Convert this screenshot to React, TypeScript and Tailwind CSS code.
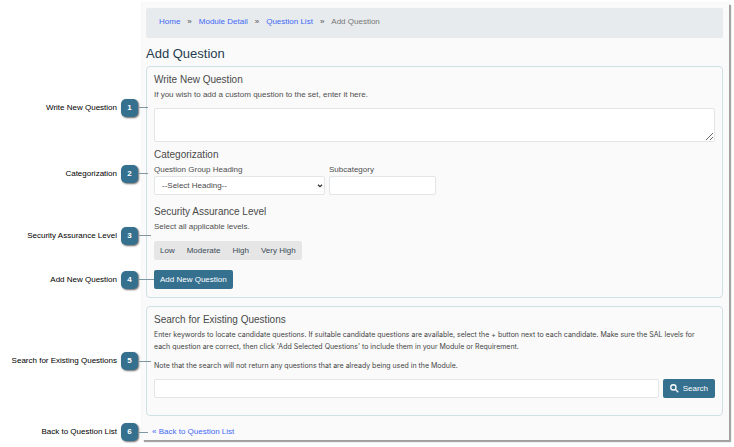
import React from "react";

type CalloutProps = {
  label: string;
  number: number;
  reach?: string;
};

function Callout({ label, number, reach = "w-[10px] mr-[6px]" }: CalloutProps) {
  return (
    <div className="absolute top-1/2 right-full flex -translate-y-1/2 items-center whitespace-nowrap">
      <span className="mr-1 text-[8px] leading-[12px] text-black">{label}</span>
      <span className="flex h-[18px] w-[17px] items-center justify-center rounded-[5px] bg-[#35708f] text-[8px] font-bold text-white shadow-[1px_1px_2px_rgba(0,0,0,0.6)]">
        {number}
      </span>
      <span className={`h-px bg-[#7f97a3] ${reach}`} />
    </div>
  );
}

const heading = "text-[10px] leading-[14px] text-[#4a4a4a]";
const field = "block rounded-[2px] border border-[#e3e6e8] bg-white text-[8px] text-[#4a4a4a]";
const button = "flex h-[19px] items-center rounded-[2px] bg-[#35708f] text-[8px] text-white";
const panel = "rounded-[4px] border border-[#cfdfe6] px-[7px]";

const crumbs = ["Home", "Module Detail", "Question List"];
const levels = ["Low", "Moderate", "High", "Very High"];

export default function App() {
  return (
    <div className="bg-white pt-[3px] pr-[5px] pb-[7px] pl-[142px] font-['Liberation_Sans',Arial,sans-serif] text-[8px] leading-[12px] text-[#4f4f4f]">
      <main className="bg-[#fafafa] px-1 pt-[5px] shadow-[0_0_1px_rgba(0,0,0,0.2),2px_2px_1px_rgba(0,0,0,0.35)]">
        <nav aria-label="Breadcrumb" className="mr-[2px] rounded-[2px] bg-[#e7ebee] px-[13px] pt-2 pb-[10px]">
          <ol className="flex items-center gap-[7px]">
            {crumbs.map((name) => (
              <li key={name} className="flex items-center gap-[7px]">
                <a href="#" className="text-[#4169f5]">{name}</a>
                <span>»</span>
              </li>
            ))}
            <li className="text-[#777]">Add Question</li>
          </ol>
        </nav>

        <h1 className="mt-[7px] mb-[3px] text-[13px] leading-[18px] text-[#1f3d4f]">Add Question</h1>

        <form className={`${panel} mr-[2px] pt-[6px] pb-2`}>
          <section className="relative">
            <Callout number={1} label="Write New Question" />
            <h2 className={heading}>Write New Question</h2>
            <label htmlFor="question" className="mt-[2px] mb-[7px] block">
              If you wish to add a custom question to the set, enter it here.
            </label>
            <textarea id="question" className={`${field} h-[34px] w-full`} />
          </section>

          <section className="relative mt-[6px] pb-1">
            <Callout number={2} label="Categorization" />
            <h2 className={heading}>Categorization</h2>
            <div className="mt-[2px] flex gap-1">
              <div className="w-[171px]">
                <label htmlFor="group" className="block">Question Group Heading</label>
                <div className="relative">
                  <select id="group" className={`${field} h-[19px] w-full appearance-none px-[7px]`}>
                    <option>--Select Heading--</option>
                  </select>
                  <svg viewBox="0 0 6 4" className="pointer-events-none absolute top-2 right-[2px] h-1 w-[6px]" fill="none" stroke="#333" strokeWidth="1.3" aria-hidden="true">
                    <path d="M1 0.7l2 2 2-2" />
                  </svg>
                </div>
              </div>
              <div className="w-[107px]">
                <label htmlFor="subcategory" className="block">Subcategory</label>
                <input id="subcategory" type="text" className={`${field} h-[19px] w-full px-1`} />
              </div>
            </div>
          </section>

          <section className="relative mt-[6px] pb-[6px]">
            <Callout number={3} label="Security Assurance Level" reach="w-[13px] mr-[3px]" />
            <h2 className={heading}>Security Assurance Level</h2>
            <p className="mt-[2px] mb-2">Select all applicable levels.</p>
            <div className="flex w-fit rounded-[2px] bg-[#e6e6e6]">
              {levels.map((level) => (
                <button key={level} type="button" className="h-[19px] px-[6px] text-[#3b4c57]">
                  {level}
                </button>
              ))}
            </div>
          </section>

          <div className="relative mt-1">
            <Callout number={4} label="Add New Question" reach="w-[16px]" />
            <button type="button" className={`${button} px-[6px]`}>Add New Question</button>
          </div>
        </form>

        <section className={`${panel} relative mt-2 mr-[2px] pt-[6px] pb-[17px]`}>
          <Callout number={5} label="Search for Existing Questions" reach="w-[13px] mr-[-4px]" />
          <h2 className={heading}>Search for Existing Questions</h2>
          <div className="font-[Inter,sans-serif] text-[7px] text-[#444]">
            <p className="mt-[2px]">
              Enter keywords to locate candidate questions. If suitable candidate questions are available, select the + button next to each candidate. Make sure the SAL levels for
              <br />
              each question are correct, then click 'Add Selected Questions' to include them in your Module or Requirement.
            </p>
            <p className="my-[7px]">
              Note that the search will not return any questions that are already being used in the Module.
            </p>
          </div>
          <div className="flex gap-1">
            <input type="text" aria-label="Keywords" className={`${field} h-[19px] min-w-0 flex-1 px-1`} />
            <button type="button" className={`${button} gap-1 px-[7px]`}>
              <svg viewBox="0 0 24 24" className="h-[9px] w-[9px]" fill="none" stroke="currentColor" strokeWidth="3.5" aria-hidden="true">
                <circle cx="9" cy="9" r="7" />
                <path d="M14 14l8 8" />
              </svg>
              Search
            </button>
          </div>
        </section>

        <div className="px-[6px] pt-[10px] pb-[2px]">
          <div className="relative">
            <Callout number={6} label="Back to Question List" reach="w-[10px] mr-[4px]" />
            <a href="#" className="text-[#4169f5]">« Back to Question List</a>
          </div>
        </div>
      </main>
    </div>
  );
}
